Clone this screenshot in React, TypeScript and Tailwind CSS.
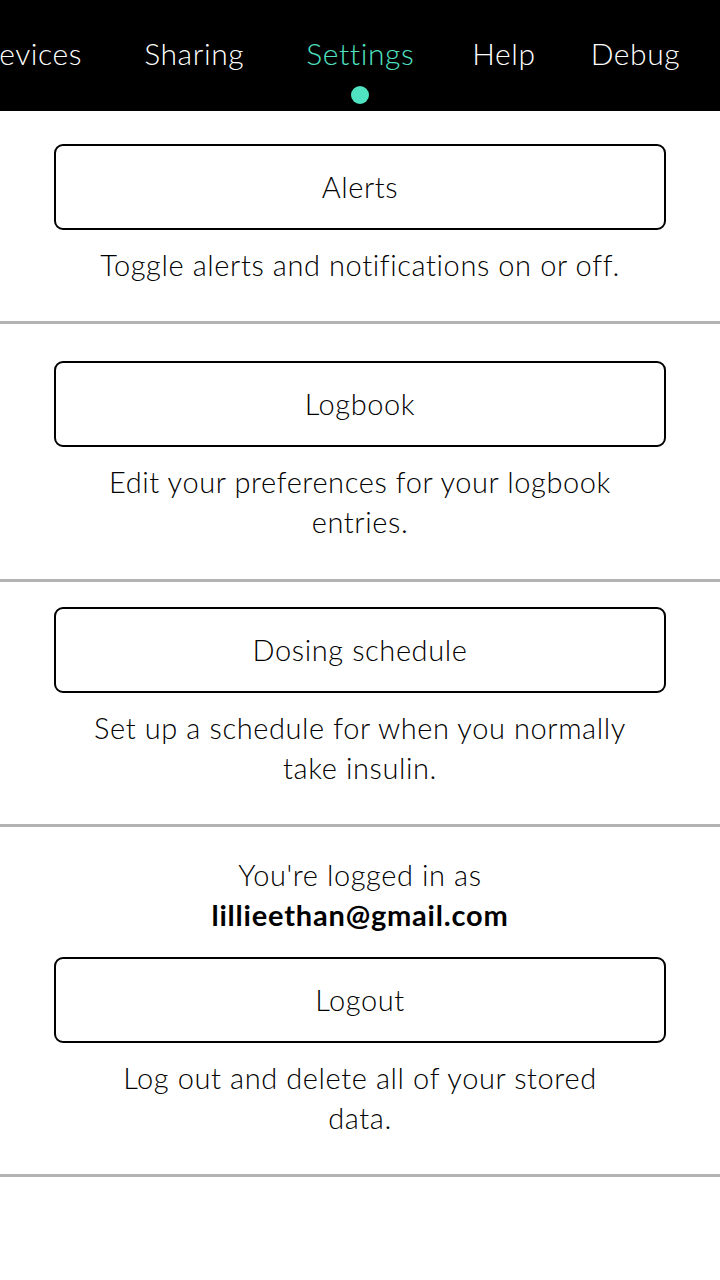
import React from "react";

const NAV = [
  { name: "Devices", ml: "ml-0" },
  { name: "Sharing", ml: "ml-[62px]" },
  { name: "Settings", ml: "ml-[62px]" },
  { name: "Help", ml: "ml-[58px]" },
  { name: "Debug", ml: "ml-[55px]" },
];

function Divider() {
  return <div className="h-[3px] w-full bg-[#b3b3b3]" />;
}

function OutlineButton({ label }: { label: string }) {
  return (
    <button className="mx-[54px] flex h-[86px] items-center justify-center rounded-[9px] border-2 border-black bg-white text-[29px] tracking-[0.6px] font-light text-black">
      {label}
    </button>
  );
}

function Desc({ lines }: { lines: string[] }) {
  return (
    <p className="mt-[15px] text-center text-[29px] leading-[40px] tracking-[0.6px] font-light text-black">
      {lines.map((l, i) => (
        <span key={i} className="block whitespace-nowrap">
          {l}
        </span>
      ))}
    </p>
  );
}

export default function App() {
  return (
    <div
      className="flex h-[1280px] w-[720px] flex-col overflow-hidden bg-white"
      style={{ fontFamily: "Lato, 'Noto Sans', sans-serif" }}
    >
      {/* Top tab bar */}
      <div className="relative h-[111px] w-full shrink-0 overflow-hidden bg-black">
        <div className="ml-[-24px] flex whitespace-nowrap pt-[33px]">
          {NAV.map((n) => (
            <div key={n.name} className={`flex flex-col items-center ${n.ml}`}>
              <span
                className={`text-[30px] leading-[40px] tracking-[0.6px] font-light ${
                  n.name === "Settings" ? "text-[#50e3c2]" : "text-white"
                }`}
              >
                {n.name}
              </span>
              {n.name === "Settings" && (
                <span className="mt-[13px] h-[18px] w-[18px] rounded-full bg-[#50e3c2]" />
              )}
            </div>
          ))}
        </div>
      </div>

      {/* Alerts */}
      <div className="flex flex-col pt-[33px] pb-[36px]">
        <OutlineButton label="Alerts" />
        <Desc lines={["Toggle alerts and notifications on or off."]} />
      </div>
      <Divider />

      {/* Logbook */}
      <div className="flex flex-col pt-[37px] pb-[37px]">
        <OutlineButton label="Logbook" />
        <Desc lines={["Edit your preferences for your logbook", "entries."]} />
      </div>
      <Divider />

      {/* Dosing schedule */}
      <div className="flex flex-col pt-[25px] pb-[36px]">
        <OutlineButton label="Dosing schedule" />
        <Desc lines={["Set up a schedule for when you normally", "take insulin."]} />
      </div>
      <Divider />

      {/* Account */}
      <div className="flex flex-col pt-[28px] pb-[36px]">
        <p className="text-center text-[29px] leading-[40px] tracking-[0.6px] font-light text-black">
          You're logged in as
        </p>
        <p className="mb-[22px] text-center text-[29px] leading-[40px] tracking-[0.8px] font-bold text-black">
          lillieethan@gmail.com
        </p>
        <OutlineButton label="Logout" />
        <Desc lines={["Log out and delete all of your stored", "data."]} />
      </div>
      <Divider />
    </div>
  );
}
